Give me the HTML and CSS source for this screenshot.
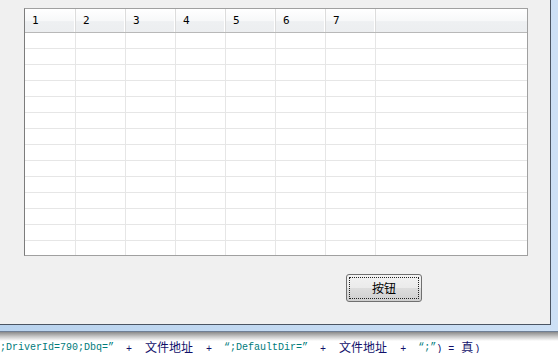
FILE: index.html
```html
<!DOCTYPE html>
<html>
<head>
<meta charset="utf-8">
<link rel="stylesheet" href="styles.css">
</head>
<body>
<div class="frame">
  <div class="client">
    <div class="grid">
      <div class="head">
        <div class="hc">1</div><div class="hc">2</div><div class="hc">3</div><div class="hc">4</div><div class="hc">5</div><div class="hc">6</div><div class="hc">7</div><div class="hrest"></div>
      </div>
      <div class="body">
        <div class="row"><i></i><i></i><i></i><i></i><i></i><i></i><i></i></div>
        <div class="row"><i></i><i></i><i></i><i></i><i></i><i></i><i></i></div>
        <div class="row"><i></i><i></i><i></i><i></i><i></i><i></i><i></i></div>
        <div class="row"><i></i><i></i><i></i><i></i><i></i><i></i><i></i></div>
        <div class="row"><i></i><i></i><i></i><i></i><i></i><i></i><i></i></div>
        <div class="row"><i></i><i></i><i></i><i></i><i></i><i></i><i></i></div>
        <div class="row"><i></i><i></i><i></i><i></i><i></i><i></i><i></i></div>
        <div class="row"><i></i><i></i><i></i><i></i><i></i><i></i><i></i></div>
        <div class="row"><i></i><i></i><i></i><i></i><i></i><i></i><i></i></div>
        <div class="row"><i></i><i></i><i></i><i></i><i></i><i></i><i></i></div>
        <div class="row"><i></i><i></i><i></i><i></i><i></i><i></i><i></i></div>
        <div class="row"><i></i><i></i><i></i><i></i><i></i><i></i><i></i></div>
        <div class="row"><i></i><i></i><i></i><i></i><i></i><i></i><i></i></div>
        <div class="row"><i></i><i></i><i></i><i></i><i></i><i></i><i></i></div>
      </div>
    </div>
    <div class="btnrow"><button class="btn"><span>按钮</span></button></div>
  </div>
</div>
<div class="shadow"></div>
<div class="code"><span class="s">;DriverId=790;Dbq=”</span><span class="o">&nbsp;&nbsp;+&nbsp;&nbsp;<b>文件地址</b>&nbsp;&nbsp;+&nbsp;&nbsp;</span><span class="s">“;DefaultDir=”</span><span class="o">&nbsp;&nbsp;+&nbsp;&nbsp;<b>文件地址</b>&nbsp;&nbsp;+&nbsp;&nbsp;</span><span class="s">“;”</span><span class="o">)&nbsp;=&nbsp;<b>真</b>)</span></div>
</body>
</html>
```
FILE: styles.css
```css
html, body { margin: 0; padding: 0; }
body {
  width: 558px;
  height: 353px;
  overflow: hidden;
  background: #ffffff;
  font-family: "Liberation Sans", "Noto Sans CJK SC", sans-serif;
}
.frame {
  width: 558px;
  background: linear-gradient(to right, #b9d3ee, #cde0f5);
  padding-bottom: 6px;
  border-bottom: 1px solid #6f7f95;
}
.client {
  width: 551px;
  height: 325px;
  background: #f0f0f0;
  border-right: 1px solid #4b5563;
  border-bottom: 1px solid #4b5563;
  padding-top: 8px;
  box-sizing: border-box;
}
.grid {
  margin-left: 24px;
  width: 504px;
  height: 248px;
  box-sizing: border-box;
  border: 1px solid #a0a0a0;
  border-left-color: #7c7c7c;
  background: #ffffff;
  overflow: hidden;
}
.head {
  display: flex;
  height: 24px;
  box-sizing: border-box;
  border-bottom: 1px solid #b8b8b8;
  background: linear-gradient(to bottom, #ffffff 0%, #f7f8f9 50%, #eef0f2 55%, #eceef0 100%);
}
.hc {
  width: 50px;
  box-sizing: border-box;
  border-right: 1px solid #dcdcdc;
  box-shadow: inset -1px 0 0 #ffffff;
  line-height: 23px;
  padding-left: 7px;
  color: #000;
  font-family: "DejaVu Sans Mono", "Liberation Mono", monospace;
  font-size: 11px;
}
.hc:first-child { width: 51px; }
.hrest { flex: 1; }
.row {
  display: flex;
  height: 16px;
  box-sizing: border-box;
  border-bottom: 1px solid #e6e6e6;
}
.row i {
  width: 50px;
  box-sizing: border-box;
  border-right: 1px solid #e6e6e6;
}
.row i:first-child { width: 51px; }
.btnrow {
  padding-top: 18px;
  padding-left: 346px;
}
.btn {
  width: 76px;
  height: 28px;
  margin: 0;
  padding: 2px;
  border: 1px solid #707070;
  border-radius: 3px;
  background: linear-gradient(to bottom, #f2f2f2 0%, #ebebeb 50%, #dddddd 51%, #cfcfcf 100%);
  box-sizing: border-box;
  display: block;
}
.btn span {
  display: block;
  height: 100%;
  box-sizing: border-box;
  border: 1px dotted #222;
  font-family: "Noto Sans CJK SC", sans-serif;
  font-size: 12px;
  line-height: 20px;
  color: #000;
  text-align: center;
}
.shadow {
  height: 9px;
  background: linear-gradient(to bottom, #8a8a8a, #c8c8c8 50%, #ffffff);
}
.code {
  height: 14px;
  white-space: nowrap;
  font-family: "Liberation Mono", "Noto Sans CJK SC", monospace;
  font-size: 10px;
  line-height: 14px;
  display: flex;
  align-items: center;
}
.code .s { color: #007b7b; }
.code .o { color: #10106a; }
.code b {
  font-weight: normal;
  font-family: "Noto Sans CJK SC", sans-serif;
  font-size: 12px;
  line-height: 14px;
  margin: 0 1px;
}
```
